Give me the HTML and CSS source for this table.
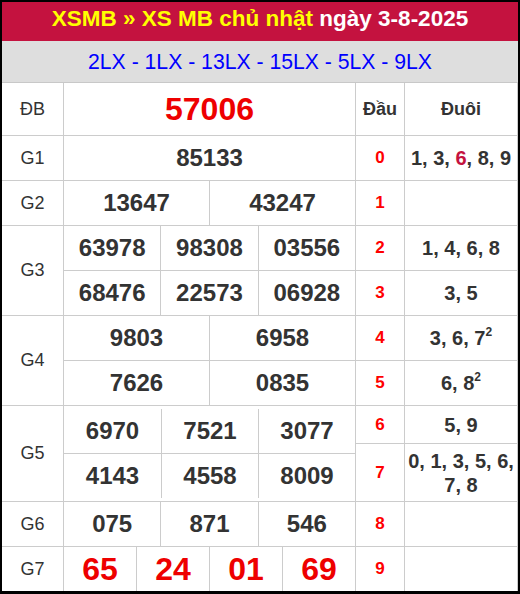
FILE: index.html
```html
<!DOCTYPE html>
<html lang="vi">
<head>
<meta charset="utf-8">
<title>XSMB chủ nhật 3-8-2025</title>
<link rel="stylesheet" href="styles.css">
</head>
<body>
<div class="frame">
  <div class="title"><span class="hl">XSMB » XS MB chủ nhật</span> ngày 3-8-2025</div>
  <div class="codes">2LX - 1LX - 13LX - 15LX - 5LX - 9LX</div>
  <div class="board">
    <div class="c lbl">ĐB</div>
    <div class="c n db">57006</div>
    <div class="c head">Đầu</div>
    <div class="c head">Đuôi</div>

    <div class="c lbl">G1</div>
    <div class="c n">85133</div>
    <div class="c dau">0</div>
    <div class="c tail"><span class="t">1, 3, <span class="mark">6</span>, 8, 9</span></div>

    <div class="c lbl">G2</div>
    <div class="c row"><div class="n">13647</div><div class="n">43247</div></div>
    <div class="c dau">1</div>
    <div class="c tail"></div>

    <div class="c lbl span2">G3</div>
    <div class="c row"><div class="n">63978</div><div class="n">98308</div><div class="n">03556</div></div>
    <div class="c dau">2</div>
    <div class="c tail"><span class="t">1, 4, 6, 8</span></div>
    <div class="c row"><div class="n">68476</div><div class="n">22573</div><div class="n">06928</div></div>
    <div class="c dau">3</div>
    <div class="c tail"><span class="t">3, 5</span></div>

    <div class="c lbl span2">G4</div>
    <div class="c row"><div class="n">9803</div><div class="n">6958</div></div>
    <div class="c dau">4</div>
    <div class="c tail"><span class="t">3, 6, 7<sup class="sq">2</sup></span></div>
    <div class="c row"><div class="n">7626</div><div class="n">0835</div></div>
    <div class="c dau">5</div>
    <div class="c tail"><span class="t">6, 8<sup class="sq">2</sup></span></div>

    <div class="c lbl span3">G5</div>
    <div class="c g5 span3">
      <div class="g5col"><div class="n">6970</div><div class="n">4143</div></div>
      <div class="g5col"><div class="n">7521</div><div class="n">4558</div></div>
      <div class="g5col"><div class="n">3077</div><div class="n">8009</div></div>
    </div>
    <div class="c dau">6</div>
    <div class="c tail"><span class="t">5, 9</span></div>
    <div class="c dau span2">7</div>
    <div class="c tail span2"><span class="t">0, 1, 3, 5, 6, 7, 8</span></div>

    <div class="c lbl">G6</div>
    <div class="c row"><div class="n">075</div><div class="n">871</div><div class="n">546</div></div>
    <div class="c dau">8</div>
    <div class="c tail"></div>

    <div class="c lbl">G7</div>
    <div class="c row"><div class="n big">65</div><div class="n big">24</div><div class="n big">01</div><div class="n big">69</div></div>
    <div class="c dau">9</div>
    <div class="c tail"></div>
  </div>
</div>
</body>
</html>
```
FILE: styles.css
```css
* { box-sizing: border-box; }
html, body { margin: 0; padding: 0; background: #000; }
body {
  width: 520px;
  height: 594px;
  font-family: "Liberation Sans", Arial, sans-serif;
  color: #333;
}
.frame {
  width: 520px;
  height: 594px;
  border-style: solid;
  border-color: #000;
  border-width: 2px 2px 3px 2px;
  background: #fff;
  display: flex;
  flex-direction: column;
}
.title {
  height: 39px;
  background: #c4123f;
  color: #fff;
  font-weight: bold;
  font-size: 22.5px;
  line-height: 33px;
  padding-bottom: 6px;
  text-align: center;
  white-space: nowrap;
}
.title .hl { color: #ffff00; }
.codes {
  height: 42px;
  background: #dedede;
  border-bottom: 1px solid #c8c8c8;
  color: #0000ff;
  font-size: 21.2px;
  line-height: 41px;
  text-align: center;
  white-space: nowrap;
}
.board {
  display: grid;
  grid-template-columns: 61px 291px 48px 112px;
  grid-template-rows: 52px repeat(6, 44px) 37px 9px 47px 44px 44px;
  gap: 1px;
  background: #cccccc;
  border-right: 1px solid #cccccc;
}
.c {
  background: #fff;
  display: flex;
  align-items: center;
  justify-content: center;
  text-align: center;
}
.span2 { grid-row: span 2; }
.span3 { grid-row: span 3; }
.lbl { font-size: 18px; color: #333; }
.n {
  font-weight: bold;
  font-size: 24px;
  color: #333;
}
.db { font-size: 32px; color: #ee0000; }
.big { font-size: 32px; color: #ee0000; }
.head { font-weight: bold; font-size: 18px; color: #333; }
.dau { font-weight: bold; font-size: 17px; color: #ff0000; }
.tail {
  font-weight: bold;
  font-size: 20px;
  line-height: 24px;
  color: #333;
  padding: 0 2px;
}
.t { display: block; }
.mark { color: #c4123f; }
.sq {
  font-size: 12px;
  vertical-align: 9px;
  line-height: 0;
}
.row { align-items: stretch; }
.row .n {
  flex: 1 1 0;
  display: flex;
  align-items: center;
  justify-content: center;
}
.row .n + .n { border-left: 1px solid #cccccc; }
.g5 {
  display: grid;
  grid-template-columns: repeat(3, 1fr);
  align-items: stretch;
}
.g5col {
  display: flex;
  flex-direction: column;
  margin: 3px 0;
}
.g5col + .g5col { border-left: 1px solid #cccccc; }
.g5col .n {
  flex: 1 1 0;
  display: flex;
  align-items: center;
  justify-content: center;
}
.g5col .n:first-child { border-bottom: 1px solid #cccccc; }
```
